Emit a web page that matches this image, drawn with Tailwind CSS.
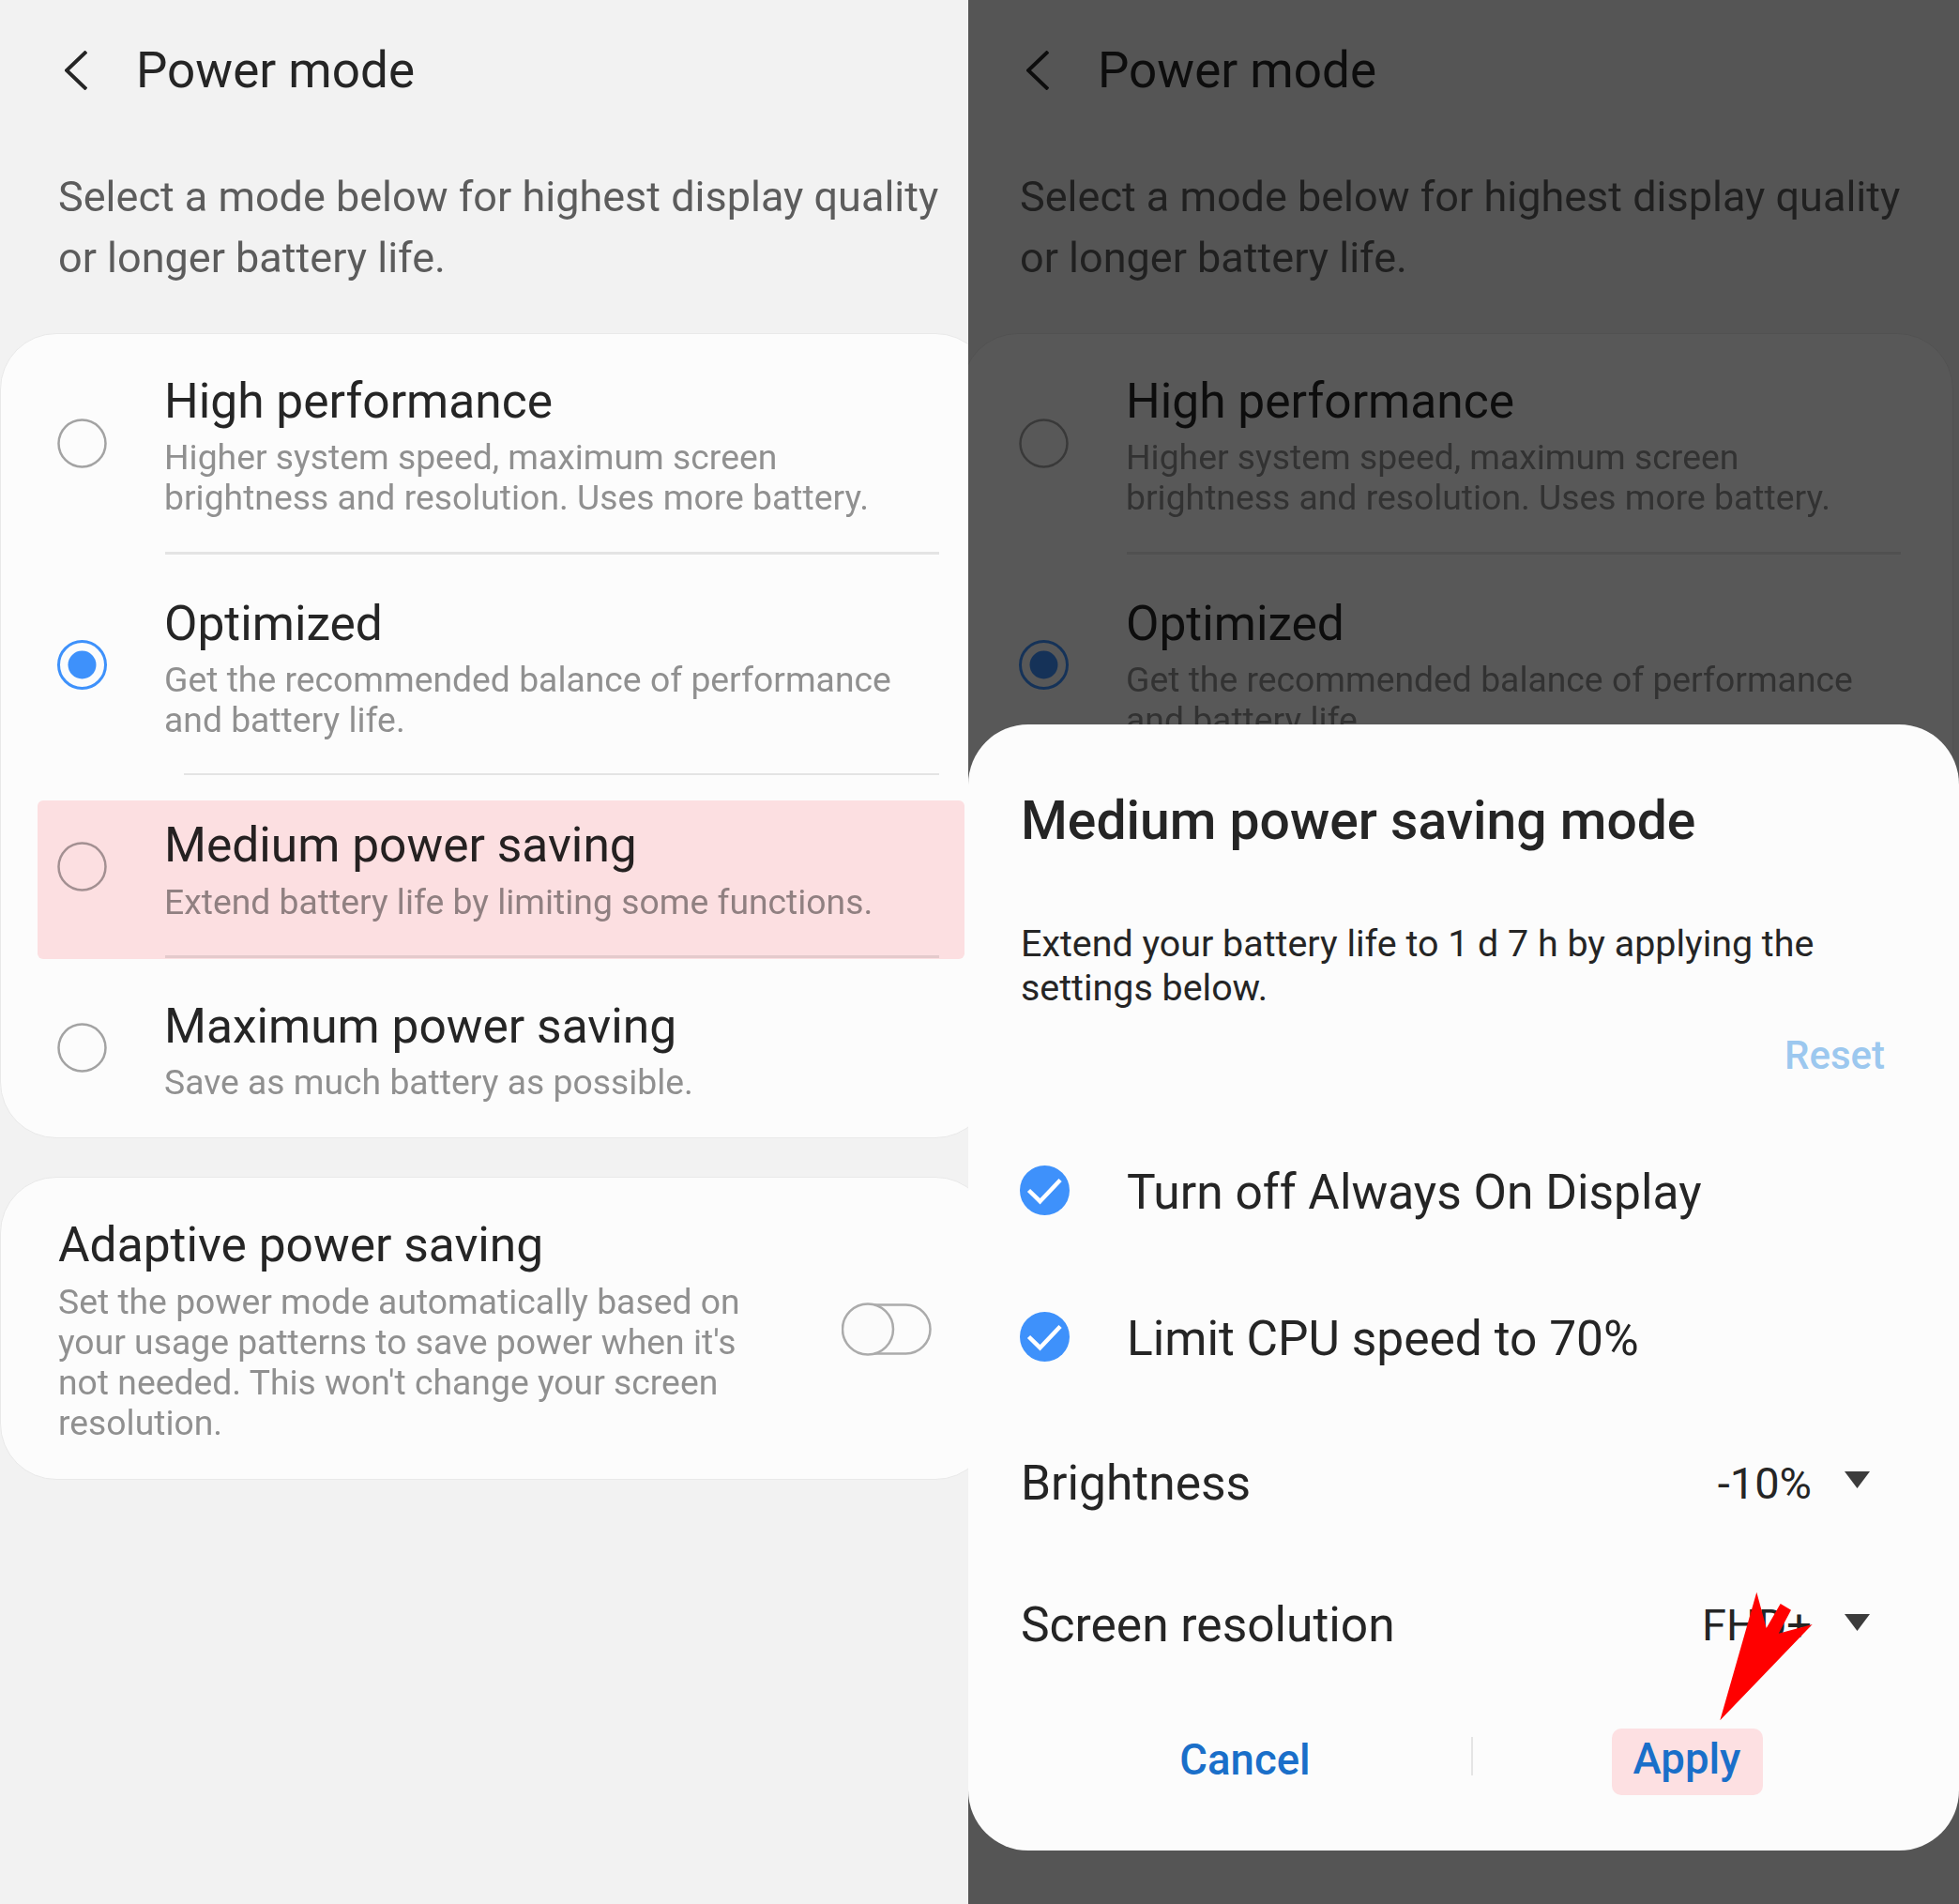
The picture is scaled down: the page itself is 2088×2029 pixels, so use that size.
<!DOCTYPE html>
<html lang="en">
<head>
    <meta charset="UTF-8">
    <meta name="viewport" content="width=device-width, initial-scale=1.0">
    <title>Power mode</title>
    <script src="https://cdn.jsdelivr.net/npm/@tailwindcss/browser@4"></script>
</head>
<body class="bg-[#f2f2f2] font-[Roboto,sans-serif] text-[#252525]">
<div class="flex w-[2088px] h-[2029px] overflow-hidden">

    <!-- left screen -->
    <div class="relative w-[1032px] h-full overflow-hidden shrink-0">
        <div class="w-[1057px]">
            <div class="flex items-center h-[150px] pl-[69px]">
                <svg width="24" height="42" viewBox="0 0 24 42" fill="none" stroke="#252525" stroke-width="4"><path d="M23 1 L2 21 L23 41"/></svg>
                <h1 class="ml-[52px] text-[53px] leading-[60px]">Power mode</h1>
            </div>
            <p class="mt-[27px] mb-[-1px] pl-[62px] text-[45px] leading-[65px] text-[#5c5c5c] whitespace-nowrap">Select a mode below for highest display quality<br>or longer battery life.</p>
            <div class="mt-[49px] rounded-[60px] bg-[#fcfcfc] border border-[#e9e9e9]">
                <div class="flex items-center pl-[60px]">
                    <svg width="53" height="53" viewBox="0 0 53 53" fill="none"><circle cx="26.5" cy="26.5" r="25" stroke="#a3a3a3" stroke-width="2.5"/></svg>
                    <div class="ml-[61px] pt-[42px] pb-[36px]">
                        <div class="text-[51.5px] leading-[60px]">High performance</div>
                        <div class="mt-[8px] text-[37.3px] leading-[43px] text-[#909090] whitespace-nowrap">Higher system speed, maximum screen<br>brightness and resolution. Uses more battery.</div>
                    </div>
                </div>
                <div class="h-[2.5px] ml-[175px] mr-[55px] bg-[#e4e4e4]"></div>
                <div class="flex items-center pl-[60px]">
                    <svg class="mt-[2px]" width="53" height="53" viewBox="0 0 53 53" fill="none"><circle cx="26.5" cy="26.5" r="25" stroke="#3e91fb" stroke-width="3"/><circle cx="26.5" cy="26.5" r="15" fill="#3e91fb"/></svg>
                    <div class="ml-[61px] pt-[44px] pb-[35px]">
                        <div class="text-[51.5px] leading-[60px]">Optimized</div>
                        <div class="mt-[8px] text-[37.3px] leading-[43px] text-[#909090] whitespace-nowrap">Get the recommended balance of performance<br>and battery life.</div>
                    </div>
                </div>
                <div class="h-[2.5px] ml-[195px] mr-[55px] bg-[#e4e4e4]"></div>
                <div class="flex items-center pl-[60px]">
                    <svg class="mt-[2px]" width="53" height="53" viewBox="0 0 53 53" fill="none"><circle cx="26.5" cy="26.5" r="25" stroke="#a3a3a3" stroke-width="2.5"/></svg>
                    <div class="ml-[61px] pt-[45px] pb-[35px]">
                        <div class="text-[51.5px] leading-[60px]">Medium power saving</div>
                        <div class="mt-[9px] text-[37.3px] leading-[43px] text-[#909090] whitespace-nowrap">Extend battery life by limiting some functions.</div>
                    </div>
                </div>
                <div class="h-[2.5px] ml-[175px] mr-[55px] bg-[#e4e4e4]"></div>
                <div class="flex items-center pl-[60px]">
                    <svg width="53" height="53" viewBox="0 0 53 53" fill="none"><circle cx="26.5" cy="26.5" r="25" stroke="#a3a3a3" stroke-width="2.5"/></svg>
                    <div class="ml-[61px] pt-[43px] pb-[37px]">
                        <div class="text-[51.5px] leading-[60px]">Maximum power saving</div>
                        <div class="mt-[8px] text-[37.3px] leading-[43px] text-[#909090] whitespace-nowrap">Save as much battery as possible.</div>
                    </div>
                </div>
            </div>
            <div class="flex items-center justify-between mt-[41px] pl-[61px] pr-[63px] pt-[42px] pb-[38px] rounded-[60px] bg-[#fcfcfc] border border-[#e9e9e9]">
                <div>
                    <div class="text-[51.5px] leading-[60px]">Adaptive power saving</div>
                    <div class="mt-[9px] text-[37.3px] leading-[43px] text-[#909090] whitespace-nowrap">Set the power mode automatically based on<br>your usage patterns to save power when it's<br>not needed. This won't change your screen<br>resolution.</div>
                </div>
                <svg class="mb-[2px]" width="96" height="57" viewBox="0 0 96 57" fill="none" stroke="#ababab" stroke-width="2.5"><rect x="1.5" y="2.5" width="93" height="52" rx="26"/><circle cx="28" cy="28.5" r="27" fill="#fbfbfb"/></svg>
            </div>
        </div>
        <!-- pink highlight laid over the medium row -->
        <div class="absolute left-[40px] top-[853px] w-[988px] h-[169px] rounded-[6px] bg-[#ffe2e4] mix-blend-multiply"></div>
    </div>

    <!-- right screen, dimmed behind the dialog -->
    <div class="relative w-[1056px] h-full overflow-hidden shrink-0">
        <div class="w-[1057px] ml-[-7px]">
            <div class="flex items-center h-[150px] pl-[69px]">
                <svg width="24" height="42" viewBox="0 0 24 42" fill="none" stroke="#252525" stroke-width="4"><path d="M23 1 L2 21 L23 41"/></svg>
                <div class="ml-[52px] text-[53px] leading-[60px]">Power mode</div>
            </div>
            <p class="mt-[27px] mb-[-1px] pl-[62px] text-[45px] leading-[65px] text-[#5c5c5c] whitespace-nowrap">Select a mode below for highest display quality<br>or longer battery life.</p>
            <div class="mt-[49px] rounded-[60px] bg-[#fcfcfc] border border-[#e9e9e9]">
                <div class="flex items-center pl-[60px]">
                    <svg width="53" height="53" viewBox="0 0 53 53" fill="none"><circle cx="26.5" cy="26.5" r="25" stroke="#a3a3a3" stroke-width="2.5"/></svg>
                    <div class="ml-[61px] pt-[42px] pb-[36px]">
                        <div class="text-[51.5px] leading-[60px]">High performance</div>
                        <div class="mt-[8px] text-[37.3px] leading-[43px] text-[#909090] whitespace-nowrap">Higher system speed, maximum screen<br>brightness and resolution. Uses more battery.</div>
                    </div>
                </div>
                <div class="h-[2.5px] ml-[175px] mr-[55px] bg-[#e4e4e4]"></div>
                <div class="flex items-center pl-[60px]">
                    <svg class="mt-[2px]" width="53" height="53" viewBox="0 0 53 53" fill="none"><circle cx="26.5" cy="26.5" r="25" stroke="#3e91fb" stroke-width="3"/><circle cx="26.5" cy="26.5" r="15" fill="#3e91fb"/></svg>
                    <div class="ml-[61px] pt-[44px] pb-[35px]">
                        <div class="text-[51.5px] leading-[60px]">Optimized</div>
                        <div class="mt-[8px] text-[37.3px] leading-[43px] text-[#909090] whitespace-nowrap">Get the recommended balance of performance<br>and battery life.</div>
                    </div>
                </div>
                <div class="h-[340px]"></div>
            </div>
        </div>
        <div class="absolute inset-0 bg-black/65"></div>

        <div class="absolute left-0 top-[772px] w-[1056px] h-[1200px] rounded-[64px] bg-[#fcfcfc] pt-[73px]">
            <h2 class="pl-[56px] text-[57px] leading-[60px] font-medium">Medium power saving mode</h2>
            <p class="mt-[78px] pl-[56px] text-[39.4px] leading-[46.5px] whitespace-nowrap">Extend your battery life to 1 d 7 h by applying the<br>settings below.</p>
            <div class="mt-[24px] pr-[79px] text-right text-[42px] leading-[50px] font-medium text-[#9cc8ef]">Reset</div>
            <div class="flex items-center mt-[89px] h-[60px] pl-[55px]">
                <svg class="mb-[2px]" width="53" height="53" viewBox="0 0 53 53"><circle cx="26.5" cy="26.5" r="26.5" fill="#3e91fb"/><path d="M9.5 26.5 L21.5 38.2 L43.1 15.5" fill="none" stroke="#fff" stroke-width="4.5"/></svg>
                <div class="ml-[61px] pt-[4px] text-[51.5px] leading-[60px]">Turn off Always On Display</div>
            </div>
            <div class="flex items-center mt-[96px] h-[60px] pl-[55px]">
                <svg class="mb-[2px]" width="53" height="53" viewBox="0 0 53 53"><circle cx="26.5" cy="26.5" r="26.5" fill="#3e91fb"/><path d="M9.5 26.5 L21.5 38.2 L43.1 15.5" fill="none" stroke="#fff" stroke-width="4.5"/></svg>
                <div class="ml-[61px] pt-[4px] text-[51.5px] leading-[60px]">Limit CPU speed to 70%</div>
            </div>
            <div class="flex items-center mt-[95px] h-[60px] pl-[56px] pr-[95px]">
                <div class="pt-[2px] text-[51.5px] leading-[60px]">Brightness</div>
                <div class="ml-auto pt-[2px] text-[47px] leading-[60px]">-10%</div>
                <svg class="ml-[35px] mb-[6px]" width="27" height="18" viewBox="0 0 27 18"><path d="M0 0 H27 L13.5 18 Z" fill="#3c3c3c"/></svg>
            </div>
            <div class="flex items-center mt-[91px] h-[60px] pl-[56px] pr-[95px]">
                <div class="pt-[2px] text-[51.5px] leading-[60px]">Screen resolution</div>
                <div class="ml-auto pt-[2px] text-[47px] leading-[60px]">FHD+</div>
                <svg class="ml-[35px] mb-[5px]" width="27" height="18" viewBox="0 0 27 18"><path d="M0 0 H27 L13.5 18 Z" fill="#3c3c3c"/></svg>
            </div>
            <div class="grid grid-cols-[480px_2px_1fr] mt-[81px] mx-[56px] h-[71px] text-[#1a6fc9] text-[45.5px] font-medium">
                <div class="flex items-center justify-center pb-[5px] pr-[2px]">Cancel</div>
                <div class="mt-[9px] h-[41px] bg-[#e4e4e4]"></div>
                <div class="flex justify-center pr-[6px]">
                    <div class="flex items-center justify-center w-[161px] h-[71px] pb-[5px] rounded-[10px] bg-[#fde0e2]">Apply</div>
                </div>
            </div>
        </div>
    </div>
</div>

<!-- red arrow annotation drawn over the dialog -->
<svg class="absolute left-[1820px] top-[1690px]" width="120" height="150" viewBox="1820 1690 120 150"><polygon points="1833.3,1833.3 1872.3,1696.7 1882.7,1735 1897.7,1709 1909,1715.7 1895.7,1740.7 1931.7,1731" fill="#ff0000"/></svg>
</body>
</html>
